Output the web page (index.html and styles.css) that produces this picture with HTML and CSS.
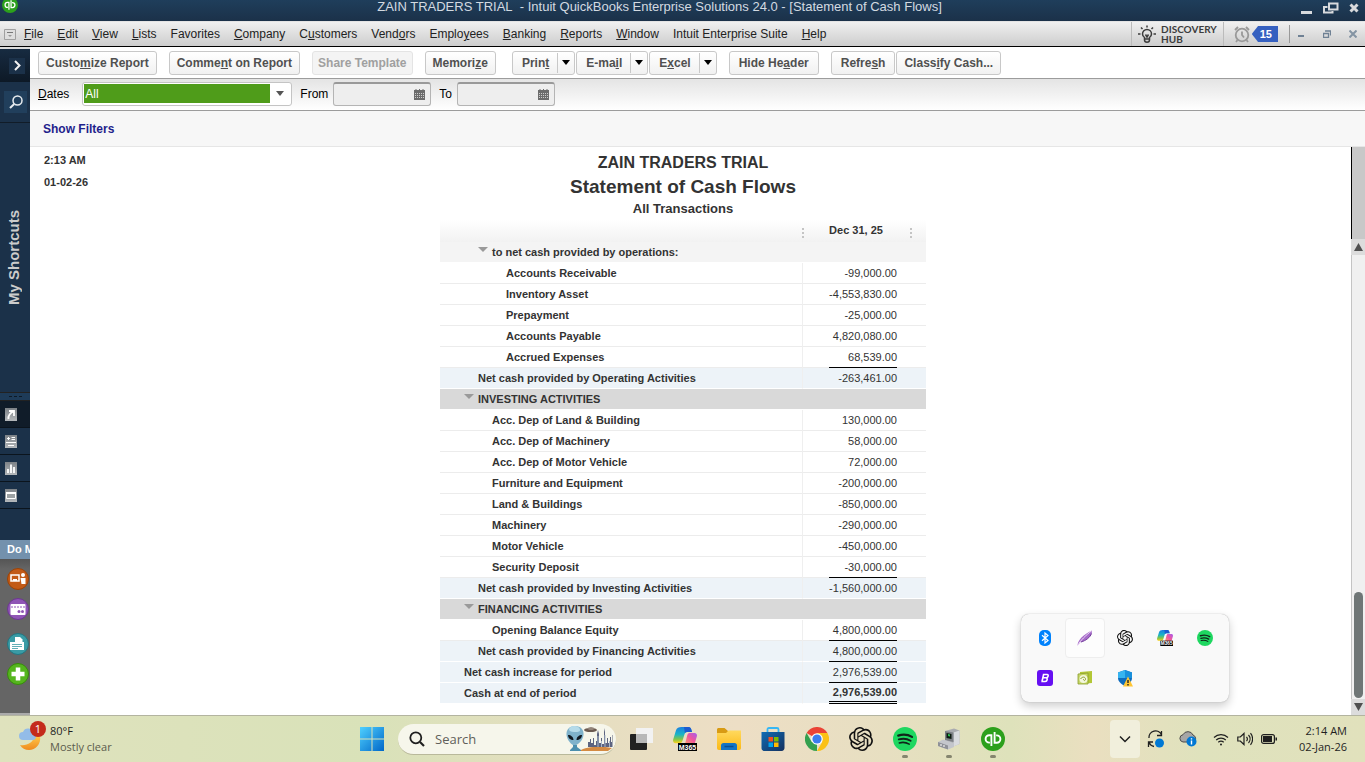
FILE: index.html
```
<!DOCTYPE html>
<html lang="en">
<head>
  <meta charset="UTF-8">
  <title>Statement of Cash Flows</title>
  <link rel="stylesheet" href="styles.css">
</head>
<body>

  <!-- shared icons -->
  <svg class="defs" aria-hidden="true">
    <defs>
      <linearGradient id="g-cop1" x1="0" y1="0" x2="0" y2="1"><stop offset="0" stop-color="#1b7fe0"/><stop offset=".45" stop-color="#19b4c8"/><stop offset=".75" stop-color="#7fc64a"/><stop offset="1" stop-color="#ffd21f"/></linearGradient>
      <linearGradient id="g-cop2" x1="1" y1="0" x2="0" y2="1"><stop offset="0" stop-color="#a55cf0"/><stop offset=".5" stop-color="#f0569c"/><stop offset="1" stop-color="#ff9a6b"/></linearGradient>
      <linearGradient id="g-win" x1="0" y1="0" x2="1" y2="1"><stop offset="0" stop-color="#4fd0ff"/><stop offset="1" stop-color="#0067c8"/></linearGradient>
      <linearGradient id="g-store" x1="0" y1="0" x2="1" y2="1"><stop offset="0" stop-color="#0f6cb5"/><stop offset="1" stop-color="#16305e"/></linearGradient>
      <linearGradient id="g-folder" x1="0" y1="0" x2="0" y2="1"><stop offset="0" stop-color="#ffd95e"/><stop offset="1" stop-color="#fbb917"/></linearGradient>
      <linearGradient id="g-moon" x1="0" y1="0" x2="0" y2="1"><stop offset="0" stop-color="#ffc94a"/><stop offset="1" stop-color="#ef8a1d"/></linearGradient>
      <linearGradient id="g-tile" x1="0" y1="0" x2="0" y2="1"><stop offset="0" stop-color="#7d8287"/><stop offset="1" stop-color="#b4b8bb"/></linearGradient>
    </defs>
    <symbol id="i-qb" viewBox="0 0 24 24">
      <circle cx="12" cy="12" r="12" fill="#2ca01c"/>
      <g fill="none" stroke="#fff" stroke-width="1.9">
        <path d="M10.4 19V8.2H8.300a3.700 3.700 0 0 0 0 7.400h.6"/>
        <path d="M13.600 5v10.800h2.100a3.700 3.700 0 0 0 0-7.400h-.6"/>
      </g>
    </symbol>
    <symbol id="i-openai" viewBox="0 0 24 24">
      <path d="M22.2819 9.8211a5.9847 5.9847 0 0 0-.5157-4.9108 6.0462 6.0462 0 0 0-6.5098-2.9A6.0651 6.0651 0 0 0 4.9807 4.1818a5.9847 5.9847 0 0 0-3.9977 2.9 6.0462 6.0462 0 0 0 .7427 7.0966 5.98 5.98 0 0 0 .511 4.9107 6.051 6.051 0 0 0 6.5146 2.9001A5.9847 5.9847 0 0 0 13.2599 24a6.0557 6.0557 0 0 0 5.7718-4.2058 5.9894 5.9894 0 0 0 3.9977-2.9001 6.0557 6.0557 0 0 0-.7475-7.0729zm-9.022 12.6081a4.4755 4.4755 0 0 1-2.8764-1.0408l.1419-.0804 4.7783-2.7582a.7948.7948 0 0 0 .3927-.6813v-6.7369l2.02 1.1686a.071.071 0 0 1 .038.052v5.5826a4.504 4.504 0 0 1-4.4945 4.4944zm-9.6607-4.1254a4.4708 4.4708 0 0 1-.5346-3.0137l.142.0852 4.783 2.7582a.7712.7712 0 0 0 .7806 0l5.8428-3.3685v2.3324a.0804.0804 0 0 1-.0332.0615L9.74 19.9502a4.4992 4.4992 0 0 1-6.1408-1.6464zM2.3408 7.8956a4.485 4.485 0 0 1 2.3655-1.9728V11.6a.7664.7664 0 0 0 .3879.6765l5.8144 3.3543-2.0201 1.1685a.0757.0757 0 0 1-.071 0l-4.8303-2.7865A4.504 4.504 0 0 1 2.3408 7.872zm16.5963 3.8558L13.1038 8.364 15.1192 7.2a.0757.0757 0 0 1 .071 0l4.8303 2.7913a4.4944 4.4944 0 0 1-.6765 8.1042v-5.6772a.79.79 0 0 0-.407-.667zm2.0107-3.0231l-.142-.0852-4.7735-2.7818a.7759.7759 0 0 0-.7854 0L9.409 9.2297V6.8974a.0662.0662 0 0 1 .0284-.0615l4.8303-2.7866a4.4992 4.4992 0 0 1 6.6802 4.66zM8.3065 12.863l-2.02-1.1638a.0804.0804 0 0 1-.038-.0567V6.0742a4.4992 4.4992 0 0 1 7.3757-3.4537l-.142.0805L8.704 5.459a.7948.7948 0 0 0-.3927.6813zm1.0976-2.3654l2.602-1.4998 2.6069 1.4998v2.9994l-2.5974 1.4997-2.6067-1.4997Z" fill="#111"/>
    </symbol>
    <symbol id="i-spotify" viewBox="0 0 24 24">
      <circle cx="12" cy="12" r="12" fill="#1ed760"/>
      <g fill="none" stroke="#10241a" stroke-linecap="round">
        <path d="M5.2 8.6c4.6-1.4 9.8-1 13.8 1.3" stroke-width="2.2"/>
        <path d="M5.8 12.4c4-1.1 8.4-.7 11.8 1.3" stroke-width="1.9"/>
        <path d="M6.3 15.9c3.4-.9 7-.5 9.9 1.2" stroke-width="1.6"/>
      </g>
    </symbol>
    <symbol id="i-m365" viewBox="0 0 24 24">
      <path d="M8.500 0h7c1.600 0 2.400 1 2.800 2.400L19 5h-4.600c-1.600 0-2.400.8-2.900 2.300L9.400 14c-.5 1.500-1.400 2.200-2.900 2.200H2.800C.6 16.200-.4 14.500.2 12.400L3 3.200C3.700 1 5.800 0 8.500 0z" fill="url(#g-cop1)"/>
      <path d="M11 0h4.500c1.600 0 2.400 1 2.800 2.400L19 5h-4.600c-1.200 0-2 .5-2.500 1.300z" fill="#1d5bd0"/>
      <path d="M16.500 6h5c2 0 2.900 1.600 2.300 3.600l-1.600 5.400c-.5 1.500-1.200 2-2.600 2H12l2.200-8.400C14.600 7 15.200 6 16.500 6z" fill="url(#g-cop2)"/>
      <rect x="5" y="16" width="19" height="8" fill="#000"/>
      <text x="14.500" y="22.600" text-anchor="middle" class="m365-text">M365</text>
    </symbol>
  </svg>

  <header class="titlebar">
    <svg class="app-logo" viewBox="0 0 24 24"><use href="#i-qb"/></svg>
    <span class="window-title">ZAIN TRADERS TRIAL&nbsp; - Intuit QuickBooks Enterprise Solutions 24.0 - [Statement of Cash Flows]</span>
    <div class="window-controls">
      <button aria-label="Minimize"><svg width="12" height="12" viewBox="0 0 12 12"><path d="M0 9h11v3H0z" fill="#d8dadd"/></svg></button>
      <button aria-label="Restore"><svg width="16" height="12" viewBox="0 0 16 12"><path d="M6 1.500h8.500v6H6zM4.500 5H1v5.500h8.500V9" fill="none" stroke="#d8dadd" stroke-width="2"/></svg></button>
      <button aria-label="Close"><svg width="10" height="12" viewBox="0 0 10 12"><path d="M1.500 2.500l7 7m0-7l-7 7" stroke="#d8dadd" stroke-width="3"/></svg></button>
    </div>
  </header>

  <nav class="menubar">
    <svg class="menu-icon" width="12" height="11" viewBox="0 0 12 11"><path d="M.5.500h11v10H.5z" fill="#dedede" stroke="#a0a0a0"/><path d="M3 3.500h6" stroke="#777"/><path d="M4 6h4L6 8z" fill="#999"/></svg>
    <ul class="menus">
      <li><a href="#"><u>F</u>ile</a></li>
      <li><a href="#"><u>E</u>dit</a></li>
      <li><a href="#"><u>V</u>iew</a></li>
      <li><a href="#"><u>L</u>ists</a></li>
      <li><a href="#">Favorites</a></li>
      <li><a href="#"><u>C</u>ompany</a></li>
      <li><a href="#">C<u>u</u>stomers</a></li>
      <li><a href="#">Vend<u>o</u>rs</a></li>
      <li><a href="#">Emplo<u>y</u>ees</a></li>
      <li><a href="#"><u>B</u>anking</a></li>
      <li><a href="#"><u>R</u>eports</a></li>
      <li><a href="#"><u>W</u>indow</a></li>
      <li><a href="#">Intuit Enterprise Suite</a></li>
      <li><a href="#"><u>H</u>elp</a></li>
    </ul>
    <button class="discovery">
      <svg width="18" height="18" viewBox="0 0 18 18" fill="none" stroke="#3c3c3c" stroke-width="1.500"><path d="M6.500 12.500C5 11.500 4.500 10.300 4.500 9a4.500 4.500 0 0 1 9 0c0 1.300-.5 2.500-2 3.500V15c0 1.500-1 2.200-2.500 2.200S6.500 16.500 6.500 15zM6.500 14h5M7.500 9.500L9 12l1.500-2.500M9 .500V2.500M3 2.500l1.500 1.500M15 2.500L13.500 4M0 9h2.500M15.500 9H18"/></svg>
      <span>DISCOVERY<br>HUB</span>
    </button>
    <button class="reminders" aria-label="Reminders">
      <svg width="16" height="17" viewBox="0 0 16 17" fill="none" stroke="#999" stroke-width="1.800"><circle cx="8" cy="9" r="6.300"/><path d="M8 5.500V9l2 2.500M1 4l3-3M15 4l-3-3M3.500 14L2 16M12.500 14l1.500 2"/></svg>
      <span class="badge">15</span>
    </button>
    <div class="doc-controls">
      <button aria-label="Minimize report"><svg width="8" height="8" viewBox="0 0 8 8"><path d="M1 5h6v2H1z" fill="#6f8194"/></svg></button>
      <button aria-label="Restore report"><svg width="8" height="8" viewBox="0 0 8 8"><path d="M2 1h5.500v4.500M.5 3.500h5v4h-5z" fill="none" stroke="#6f8194" stroke-width="1.300"/></svg></button>
      <button aria-label="Close report"><svg width="8" height="8" viewBox="0 0 8 8"><path d="M.5.500l7 7m0-7l-7 7" stroke="#8494a3" stroke-width="2"/></svg></button>
    </div>
  </nav>

  <div class="workspace">
    <aside class="sidebar">
      <button class="expand" aria-label="Expand">
        <span><svg width="7" height="11" viewBox="0 0 7 11"><path d="M1 1l4.500 4.500L1 10" fill="none" stroke="#f2f2f2" stroke-width="2"/></svg></span>
      </button>
      <button class="side-search" aria-label="Search">
        <span><svg width="14" height="14" viewBox="0 0 14 14" fill="none" stroke="#e8ecef" stroke-width="1.500"><circle cx="8.500" cy="5.500" r="4.500"/><path d="M5.200 9L1 13" stroke-width="2"/></svg></span>
      </button>
      <div class="shortcuts"><span>My Shortcuts</span></div>
      <div class="handle"><i></i><i></i><i></i></div>
      <button class="side-item active" aria-label="My Shortcuts"><svg width="12" height="13" viewBox="0 0 12 13"><path d="M0 0h12v13H0z" fill="url(#g-tile)"/><path d="M4 3h5v5M9 3C5 5 3 7.500 3.500 11" fill="none" stroke="#fff" stroke-width="1.800"/></svg></button>
      <button class="side-item" aria-label="View Balances"><svg width="12" height="13" viewBox="0 0 12 13"><path d="M0 0h12v13H0z" fill="url(#g-tile)"/><path d="M2 3.500h3M3.500 2v3M6.500 2.500H10M6.500 4.500H10M1 7.500h10M3 10.500h6" stroke="#fff" fill="none"/></svg></button>
      <button class="side-item" aria-label="Run Favorite Reports"><svg width="12" height="13" viewBox="0 0 12 13"><path d="M0 0h12v13H0z" fill="url(#g-tile)"/><path d="M3 11V7M6 11V2.500M9 11V5" stroke="#fff" stroke-width="1.800"/></svg></button>
      <button class="side-item" aria-label="Open Windows"><svg width="12" height="13" viewBox="0 0 12 13"><path d="M0 0h12v13H0z" fill="url(#g-tile)"/><path d="M1.500 3.500h9v6h-9z" fill="#9da2a4" stroke="#fff"/><path d="M1 3h10v2H1z" fill="#fff"/></svg></button>
      <div class="do-more">Do More</div>
      <div class="promos">
        <a href="#" aria-label="Payroll"><svg viewBox="0 0 22 22"><circle cx="11" cy="11" r="10.500" fill="#c25a16" stroke="#9c4307"/><path d="M4 7h8v6H4z" fill="none" stroke="#fff" stroke-width="1.500"/><path d="M6 11h4v2H6z" fill="#fff"/><circle cx="16" cy="7" r="2" fill="#fff"/><path d="M13.500 10h5v6h-4z" fill="#fff"/></svg></a>
        <a href="#" aria-label="Credit cards"><svg viewBox="0 0 22 22"><circle cx="11" cy="11" r="10.500" fill="#8f55b5" stroke="#6d3792"/><rect x="3.500" y="6" width="15" height="11" rx="1" fill="#fff"/><path d="M4 9h14" stroke="#8f55b5" stroke-dasharray="2 1"/><circle cx="12" cy="13.500" r="1.500" fill="#8f55b5"/><circle cx="15.500" cy="13.500" r="1.500" fill="#8f55b5"/></svg></a>
        <a href="#" aria-label="Order checks" class="spaced"><svg viewBox="0 0 22 22"><circle cx="11" cy="11" r="10.500" fill="#3a9ba5" stroke="#247580"/><path d="M8 4h5l2.500 2.500V10H8z" fill="#fff"/><path d="M3 9h14v8H3z" fill="#fff"/><path d="M5 11.500h10M5 13.500h10M5 15.500h6" stroke="#3a9ba5" stroke-width=".8"/></svg></a>
        <a href="#" aria-label="Add services"><svg viewBox="0 0 22 22"><circle cx="11" cy="11" r="10.500" fill="#55b51e" stroke="#378c0b"/><path d="M11 4.500v13M4.500 11h13" stroke="#fff" stroke-width="4.500"/></svg></a>
      </div>
    </aside>

    <main class="content">
      <div class="toolbar">
        <button class="btn">Custo<u>m</u>ize Report</button>
        <button class="btn">Comme<u>n</u>t on Report</button>
        <button class="btn" disabled>Share Template</button>
        <button class="btn">Memori<u>z</u>e</button>
        <div class="btn-group exports">
          <div class="split"><button>Prin<u>t</u></button><button aria-label="Print options"><span class="caret"></span></button></div>
          <div class="split"><button>E-ma<u>i</u>l</button><button aria-label="E-mail options"><span class="caret"></span></button></div>
          <div class="split"><button>E<u>x</u>cel</button><button aria-label="Excel options"><span class="caret"></span></button></div>
        </div>
        <button class="btn wide">Hide He<u>a</u>der</button>
        <div class="btn-group">
          <button class="btn wide">Refre<u>s</u>h</button>
          <button class="btn">Class<u>i</u>fy Cash...</button>
        </div>
      </div>

      <div class="datebar">
        <label for="dates"><u>D</u>ates</label>
        <div class="combo">
          <select id="dates"><option>All</option></select>
          <span class="caret"></span>
        </div>
        <label for="from">From</label>
        <div class="date-field">
          <input type="text" id="from">
          <svg width="11" height="11" viewBox="0 0 11 11"><path d="M0 1h11v10H0z" fill="#6c6c6c"/><path d="M2 0v2M5.500 0v2M9 0v2" stroke="#6c6c6c"/><path d="M1 4.500h9M1 6.500h9M1 8.500h9" stroke="#ccc" stroke-dasharray="1 1"/></svg>
        </div>
        <label for="to">To</label>
        <div class="date-field">
          <input type="text" id="to">
          <svg width="11" height="11" viewBox="0 0 11 11"><path d="M0 1h11v10H0z" fill="#6c6c6c"/><path d="M2 0v2M5.500 0v2M9 0v2" stroke="#6c6c6c"/><path d="M1 4.500h9M1 6.500h9M1 8.500h9" stroke="#ccc" stroke-dasharray="1 1"/></svg>
        </div>
      </div>

      <div class="filters"><a href="#">Show Filters</a></div>

      <div class="report-pane">
        <section class="report">
          <div class="report-meta">
            <p>2:13 AM</p>
            <p>01-02-26</p>
          </div>
          <div class="report-head">
            <h2>ZAIN TRADERS TRIAL</h2>
            <h1>Statement of Cash Flows</h1>
            <h3>All Transactions</h3>
          </div>
          <table class="statement">
            <thead>
              <tr><th><span class="grip"></span></th><th><span class="grip"></span>Dec 31, 25</th></tr>
            </thead>
            <tbody>
              <tr class="group"><td class="in3"><span class="tri"></span>to net cash provided by operations:</td><td></td></tr>
              <tr><td class="in4">Accounts Receivable</td><td><span>-99,000.00</span></td></tr>
              <tr><td class="in4">Inventory Asset</td><td><span>-4,553,830.00</span></td></tr>
              <tr><td class="in4">Prepayment</td><td><span>-25,000.00</span></td></tr>
              <tr><td class="in4">Accounts Payable</td><td><span>4,820,080.00</span></td></tr>
              <tr><td class="in4">Accrued Expenses</td><td><span class="rule">68,539.00</span></td></tr>
              <tr class="total"><td class="in2">Net cash provided by Operating Activities</td><td><span>-263,461.00</span></td></tr>
              <tr class="section"><td class="in2"><span class="tri"></span>INVESTING ACTIVITIES</td><td></td></tr>
              <tr><td class="in3">Acc. Dep of Land &amp; Building</td><td><span>130,000.00</span></td></tr>
              <tr><td class="in3">Acc. Dep of Machinery</td><td><span>58,000.00</span></td></tr>
              <tr><td class="in3">Acc. Dep of Motor Vehicle</td><td><span>72,000.00</span></td></tr>
              <tr><td class="in3">Furniture and Equipment</td><td><span>-200,000.00</span></td></tr>
              <tr><td class="in3">Land &amp; Buildings</td><td><span>-850,000.00</span></td></tr>
              <tr><td class="in3">Machinery</td><td><span>-290,000.00</span></td></tr>
              <tr><td class="in3">Motor Vehicle</td><td><span>-450,000.00</span></td></tr>
              <tr><td class="in3">Security Deposit</td><td><span class="rule">-30,000.00</span></td></tr>
              <tr class="total"><td class="in2">Net cash provided by Investing Activities</td><td><span>-1,560,000.00</span></td></tr>
              <tr class="section"><td class="in2"><span class="tri"></span>FINANCING ACTIVITIES</td><td></td></tr>
              <tr><td class="in3">Opening Balance Equity</td><td><span class="rule">4,800,000.00</span></td></tr>
              <tr class="total"><td class="in2">Net cash provided by Financing Activities</td><td><span class="rule">4,800,000.00</span></td></tr>
              <tr class="total"><td class="in1">Net cash increase for period</td><td><span class="rule">2,976,539.00</span></td></tr>
              <tr class="total grand"><td class="in1">Cash at end of period</td><td><span class="rule double">2,976,539.00</span></td></tr>
            </tbody>
          </table>
        </section>
        <div class="scrollbar">
          <div class="scroll-cap"></div>
          <button aria-label="Scroll up"><svg width="9" height="8" viewBox="0 0 9 8"><path d="M4.500 0L9 8H0z" fill="#505050"/></svg></button>
          <div class="track"><div class="thumb"></div></div>
          <button aria-label="Scroll down"><svg width="9" height="8" viewBox="0 0 9 8"><path d="M4.500 8L9 0H0z" fill="#505050"/></svg></button>
        </div>
      </div>
    </main>
  </div>

  <div class="tray-popup">
    <button aria-label="Bluetooth"><svg width="12" height="16" viewBox="0 0 12 16"><rect width="12" height="16" rx="5" fill="#0082fc"/><path d="M3 5.200l6 5.300L6 13V3l3 2.500-6 5.300" fill="none" stroke="#fff" stroke-width="1.200"/></svg></button>
    <button class="hover" aria-label="Notes"><svg width="16" height="16" viewBox="0 0 16 16"><path d="M.5 15.500C1 9.500 6.500 4.500 15 .5c.3 4.500-3.500 9-11.500 11.500z" fill="#a56ac9"/><path d="M.5 15.500C4 10 8 6 15 .5" stroke="#ecd9f5" stroke-width="1" fill="none"/><path d="M4 12C9 10.500 13 7.500 14.500 3.500" stroke="#6d3597" fill="none"/></svg></button>
    <button aria-label="ChatGPT"><svg width="16" height="16"><use href="#i-openai"/></svg></button>
    <button aria-label="Microsoft 365 Copilot"><svg width="16" height="16"><use href="#i-m365"/></svg></button>
    <button aria-label="Spotify"><svg width="16" height="16"><use href="#i-spotify"/></svg></button>
    <button aria-label="Bootstrap Studio"><svg width="16" height="16" viewBox="0 0 16 16"><rect width="16" height="16" rx="3" fill="#6610f2"/><path d="M5.800 4.500h4.400c1.500 0 1.300 3-1 3.300H6 9c2 .2 1.300 3.700-.8 3.700H4.300M6.600 4.500L5 11.500" fill="none" stroke="#fff" stroke-width="1.600"/></svg></button>
    <button aria-label="NVIDIA"><svg width="16" height="14" viewBox="0 0 16 14"><path d="M3 1l12-1v12l-12 1z" fill="#b3c736"/><path d="M1 3l10-1v11H1z" fill="#c7d86a" stroke="#8c9d2d" stroke-width=".8"/><circle cx="6.500" cy="8" r="4" fill="#f4f7df"/><path d="M3.500 8c2-3 5-2 5 0s-2 2-2 0" fill="none" stroke="#8da02c"/></svg></button>
    <button aria-label="Windows Security"><svg width="16" height="17" viewBox="0 0 16 17"><path d="M8 0l7 2.500V8c0 3.500-3 6-7 8-4-2-7-4.500-7-8V2.500z" fill="#0f6cbd"/><path d="M8 0v8H1V2.500z" fill="#36b4f0"/><path d="M8 0l7 2.500V8H8z" fill="#1890dc"/><path d="M11 6.500l5 10H6z" fill="#ffc533"/><path d="M11 10v3M11 14v1.500" stroke="#222" stroke-width="1.400"/></svg></button>
  </div>

  <footer class="taskbar">
    <button class="weather">
      <span class="weather-icon">
        <svg width="24" height="24" viewBox="0 0 24 24"><path d="M22 9c1.500 8-4.500 14-11 14-4 0-7-1.500-9-5 7 1 13-2.500 15-9z" fill="url(#g-moon)"/><path d="M5 13a4 4 0 0 1 0-8 5.500 5.500 0 0 1 10.500 1A3.600 3.600 0 0 1 15 13z" fill="#93bce8"/></svg>
        <b>1</b>
      </span>
      <span class="weather-text"><span>80°F</span><span class="muted">Mostly clear</span></span>
    </button>

    <div class="apps">
      <button aria-label="Start"><svg width="24" height="24" viewBox="0 0 24 24"><path d="M0 0h11.500v11.500H0zM12.500 0H24v11.500H12.500zM0 12.500h11.500V24H0zM12.500 12.500H24V24H12.500z" fill="url(#g-win)"/></svg></button>
      <label class="search">
        <svg width="16" height="16" viewBox="0 0 16 16" fill="none" stroke="#1f1f1f" stroke-width="1.800"><circle cx="6.800" cy="6.800" r="5.500"/><path d="M11 11l4 4" stroke-width="2.200"/></svg>
        <input type="text" placeholder="Search" aria-label="Search">
        <svg width="48" height="25" viewBox="0 0 48 25">
          <path d="M13 25c8-5 22-5 33-3l-4 3z" fill="#d48a42"/>
          <path d="M22 21v-5h2v-3h1v4h2v-5h1v7h2v-4h1V8l1-4 1 4v9h2v-5h1v6h2V6l.5-4 .5 4v11h2v-5h1v5h2v-6h1v5h1v-7h.5v12z" fill="#5d6480"/>
          <path d="M31.500 21V10h1v11M38.500 21V9h1v12M35 21v-6h1v6M43 21v-6h1v6" fill="#a9b7cb"/>
          <ellipse cx="24.500" cy="4" rx="6.500" ry="2" fill="#6b5a50"/><ellipse cx="25" cy="2.500" rx="3" ry="1.500" fill="#93857b"/>
          <path d="M9 0c6 0 9 4 8.500 9S12 19 9 19.500 1 14 .5 9 3 0 9 0z" fill="#7fb2cb"/>
          <path d="M8 0c4 0 6 2 6 4S11 6 8 6 3 5 3 3.500 5 0 8 0z" fill="#b5dbea"/>
          <path d="M2 9c3 0 5.500 2 5.500 5C4.500 14 2 12 2 9zM16 9c-3 0-5.500 2-5.500 5 3 0 5.500-2 5.500-5z" fill="#101820"/>
          <path d="M7 19h4v2l4 3v1H4v-1l3-3z" fill="#4c8fae"/>
        </svg>
      </label>
      <button aria-label="Task view"><svg width="24" height="24" viewBox="0 0 24 24"><rect x="1" y="7" width="17" height="16" rx="1" fill="#222"/><path d="M7 1h17v15H7z" fill="#f2f2f2"/><path d="M7 7h11v9H7z" fill="#b8b8b8"/></svg></button>
      <button aria-label="Microsoft 365 Copilot"><svg width="24" height="24"><use href="#i-m365"/></svg></button>
      <button aria-label="File Explorer"><svg width="24" height="22" viewBox="0 0 24 22"><path d="M0 1.500C0 .7.700 0 1.500 0h6L11 3h12c.6 0 1 .4 1 1v5H0z" fill="#d89b14"/><path d="M0 5h9l2.500-2.500H24V20c0 1-.7 2-2 2H2c-1.300 0-2-1-2-2z" fill="url(#g-folder)"/><path d="M4 22v-4.500C4 16 5 15 6.500 15h11c1.500 0 2.500 1 2.500 2.500V22z" fill="#1274c4"/><path d="M7.500 18.500h9" stroke="#0a4f90" stroke-width="1.500"/></svg></button>
      <button aria-label="Microsoft Store"><svg width="24" height="24" viewBox="0 0 24 24"><path d="M6.500 7V2.500C6.500 1.500 7 1 8 1h8c1 0 1.500.5 1.500 1.500V7" fill="none" stroke="#36b7f5" stroke-width="1.800"/><path d="M.5 5h23v16c0 1.500-1 3-3 3h-17c-2 0-3-1.500-3-3z" fill="url(#g-store)"/><path d="M7.500 10H12v4.500H7.500z" fill="#f25022"/><path d="M13 10h4.500v4.500H13z" fill="#7fba00"/><path d="M7.500 15.500H12V20H7.500z" fill="#00a4ef"/><path d="M13 15.500h4.500V20H13z" fill="#ffb900"/></svg></button>
      <button aria-label="Chrome"><svg width="24" height="24" viewBox="0 0 24 24"><path d="M12 12L1.600 6A12 12 0 0 1 22.400 6z" fill="#ea4335"/><path d="M12 12V24A12 12 0 0 1 1.600 6l5.200 9z" fill="#34a04f"/><path d="M12 6h10.400A12 12 0 0 1 12 24l5.200-9z" fill="#fbc116"/><circle cx="12" cy="12" r="5.800" fill="#fff"/><circle cx="12" cy="12" r="4.600" fill="#3b7ded"/></svg></button>
      <button aria-label="ChatGPT"><svg width="24" height="24"><use href="#i-openai"/></svg></button>
      <button class="running" aria-label="Spotify"><svg width="24" height="24"><use href="#i-spotify"/></svg></button>
      <button class="running" aria-label="Server"><svg width="22" height="22" viewBox="0 0 22 22"><path d="M7 3l9-2.500 5.500 2V16l-8 3L7 15z" fill="#a9abb0"/><path d="M15.500 4.500l6-2V16l-6 2.500z" fill="#d9dbdf"/><path d="M7 3l8.500 1.500V14L7 12z" fill="#7d8086"/><path d="M8.500 5l5 1v5l-5-1z" fill="#0c1a10"/><path d="M10 6l2 .5v2l-2-.5z" fill="#2fc04e"/><path d="M0 14l5-2.500 11 3.500v4l-6 2.500L0 18z" fill="#c4c6cc"/><path d="M0 14l10 3.500V21.500L0 18z" fill="#8f9198"/><path d="M3 16v2M6 17v2" stroke="#fff"/></svg></button>
      <button class="running" aria-label="QuickBooks"><svg width="24" height="24"><use href="#i-qb"/></svg></button>
    </div>

    <div class="tray">
      <button class="chevron" aria-label="Show hidden icons"><svg width="12" height="8" viewBox="0 0 12 8"><path d="M1 1.500l5 5 5-5" fill="none" stroke="#1f1f1f" stroke-width="1.500"/></svg></button>
      <button class="tray-cell" aria-label="Update"><svg width="18" height="18" viewBox="0 0 18 18"><path d="M2 8a6.500 6.500 0 0 1 12.500-3M14.500 1v4.500H10M1.500 17v-5H6M2 12.500c1 2 2.500 3.500 5 4" fill="none" stroke="#1f1f1f" stroke-width="1.300"/><circle cx="12.500" cy="13" r="4.500" fill="#0078d4"/></svg></button>
      <button class="tray-cell" aria-label="OneDrive"><svg width="18" height="16" viewBox="0 0 18 16"><path d="M4 11a3.700 3.700 0 0 1 0-7.300A5.500 5.500 0 0 1 14 4a4 4 0 0 1 1 7z" fill="#a6a6a6" stroke="#4b4b4b"/><circle cx="12.500" cy="10.500" r="5" fill="#0078d4"/><path d="M12.500 9.500v4M12.500 7.300v1.200" stroke="#fff" stroke-width="1.400"/></svg></button>
      <button class="tray-status" aria-label="Network, volume and battery">
        <svg width="16" height="13" viewBox="0 0 16 13" fill="none" stroke="#1f1f1f" stroke-width="1.200"><path d="M1 4.500a10 10 0 0 1 14 0M3.200 7a7 7 0 0 1 9.600 0M5.300 9.300a4 4 0 0 1 5.400 0"/><circle cx="8" cy="11.500" r="1" fill="#1f1f1f" stroke="none"/></svg>
        <svg width="16" height="14" viewBox="0 0 16 14" fill="none" stroke="#1f1f1f" stroke-width="1.200"><path d="M.8 5v4h2.500L7 12.500v-11L3.300 5zM9.500 4.800a3.500 3.500 0 0 1 0 4.400M11.500 3a6 6 0 0 1 0 8M13.500 1.200a9 9 0 0 1 0 11.600"/></svg>
        <svg width="16" height="10" viewBox="0 0 16 10"><rect x=".6" y=".6" width="12.800" height="8.800" rx="2" fill="none" stroke="#1f1f1f" stroke-width="1.200"/><path d="M2 2h9v6H2zM14.500 3.500h1.500v3h-1.500z" fill="#1f1f1f"/></svg>
      </button>
      <div class="clock"><span>2:14 AM</span><span>02-Jan-26</span></div>
    </div>
  </footer>

</body>
</html>
```
FILE: styles.css
```
* {
  box-sizing: border-box;
}

body {
  margin: 0;
  height: 100vh;
  display: flex;
  flex-direction: column;
  position: relative;
  overflow: hidden;
  background-color: #fff;
  color: #333;
  font-family: "Liberation Sans", Arial, sans-serif;
  font-size: 12px;
}

button {
  font: inherit;
  color: inherit;
  background: none;
  border: none;
  padding: 0;
}

svg {
  display: block;
  flex: none;
}

.defs {
  position: absolute;
  width: 0;
  height: 0;
}

.m365-text {
  font: bold 7px "Liberation Sans", Arial, sans-serif;
  fill: #fff;
}

/* title bar */
.titlebar {
  flex: none;
  height: 21px;
  display: flex;
  align-items: flex-start;
  overflow: hidden;
  background: linear-gradient(#1f3e5b, #1b3149);
  color: #d3dae1;
}

.app-logo {
  width: 16px;
  height: 16px;
  margin: -3px 0 0 2px;
}

.window-title {
  flex: 1;
  text-align: center;
  font-size: 13px;
  line-height: 14px;
}

.window-controls {
  display: flex;
  gap: 10px;
  padding: 2px 6px 0 0;
}

/* menu bar */
.menubar {
  flex: none;
  height: 26px;
  display: flex;
  align-items: center;
  background: linear-gradient(#f0f0f0, #cdcdcd);
  border-top: 1px solid #e4e4e4;
  border-bottom: 1px solid #000;
  color: #222;
}

.menu-icon {
  margin: 0 8px 0 4px;
}

.menus {
  flex: 1;
  display: flex;
  gap: 14px;
  margin: 0;
  padding: 0;
  list-style: none;
}

.menus a {
  color: inherit;
  text-decoration: none;
  white-space: nowrap;
}

.discovery {
  display: flex;
  align-items: center;
  align-self: stretch;
  gap: 5px;
  padding: 0 6px;
  border-left: 1px solid #bbb;
  border-right: 1px solid #bbb;
  color: #3c3c3c;
  font: bold 10px/10px Lato, sans-serif;
  text-align: left;
}

.reminders {
  display: flex;
  align-items: center;
  gap: 2px;
  padding: 0 11px 0 10px;
}

.badge {
  padding: 0 6px 0 8px;
  background-color: #3560c0;
  clip-path: polygon(0 50%, 24% 0, 100% 0, 100% 100%, 24% 100%);
  color: #fff;
  font-size: 11px;
  font-weight: bold;
  line-height: 16px;
}

.doc-controls {
  display: flex;
  gap: 18px;
  padding: 5px 8px 5px 7px;
  border-left: 1px solid #999;
}

/* left sidebar */
.workspace {
  flex: 1;
  display: flex;
  min-height: 0;
}

.sidebar {
  flex: none;
  width: 30px;
  display: flex;
  flex-direction: column;
  overflow: hidden;
  background-color: #1b3149;
  border-top: 2px solid #dcdcdc;
}

.expand {
  display: grid;
  place-items: center;
  height: 33px;
  padding-left: 4px;
  background: linear-gradient(#172b41, #0d1926);
}

.expand span {
  display: grid;
  place-items: center;
  width: 16px;
  height: 16px;
  background-color: #1b3149;
}

.side-search {
  height: 41px;
  border-bottom: 1px solid #111c28;
}

.side-search span {
  display: grid;
  place-items: center;
  width: 23px;
  height: 22px;
  margin: 0 4px;
  background-color: #213f5c;
}

.shortcuts {
  flex: 1;
  display: grid;
  place-items: center;
  padding-right: 3px;
}

.shortcuts span {
  writing-mode: vertical-rl;
  rotate: 180deg;
  color: #ccc;
  font-size: 15px;
  font-weight: bold;
}

.handle {
  display: flex;
  justify-content: center;
  align-items: center;
  gap: 2px;
  height: 9px;
  background-color: #1e3b58;
  border-top: 1px solid #222;
  border-bottom: 1px solid #222;
}

.handle i {
  width: 3px;
  height: 1px;
  background-color: #0c1926;
}

.side-item {
  height: 27px;
  padding-left: 5px;
  border-bottom: 1px solid #0b141d;
}

.side-item.active {
  background-color: #101c29;
}

.do-more {
  height: 19px;
  margin-top: 31px;
  padding-left: 7px;
  background: #7391ad;
  color: #fff;
  font-size: 11px;
  font-weight: bold;
  line-height: 19px;
  white-space: nowrap;
}

.promos {
  height: 156px;
  padding: 9px 0 0 7px;
  background: linear-gradient(#555, #656565 10px);
  border-bottom: 2px solid #aaa;
}

.promos a {
  display: block;
  width: 22px;
  height: 22px;
  margin-bottom: 8px;
}

.promos .spaced {
  margin-top: 13px;
}

/* report window */
.content {
  flex: 1;
  min-width: 0;
  display: flex;
  flex-direction: column;
}

.toolbar {
  flex: none;
  height: 32px;
  display: flex;
  align-items: center;
  gap: 12px;
  padding-left: 8px;
  border-bottom: 1px solid #9c9c9c;
  color: #505050;
  font-weight: bold;
}

.btn,
.split {
  height: 24px;
  border: 1px solid #c8c8c8;
  border-radius: 3px;
  background: linear-gradient(#fff, #f1f1f1);
  white-space: nowrap;
}

.btn {
  padding: 0 7px;
}

.btn.wide {
  padding: 0 9px;
}

.btn:disabled {
  background: #f4f4f4;
  border-color: #e4e4e4;
  color: #a0a0a0;
  padding: 0 5px;
}

.btn-group {
  display: flex;
  gap: 1px;
}

.exports {
  margin-left: 4px;
}

.split {
  display: flex;
  align-items: stretch;
}

.split button:first-child {
  padding: 0 8px 0 9px;
}

.split button:last-child {
  display: grid;
  place-items: center;
  width: 17px;
  margin: 1px 0;
  border-left: 1px solid #c8c8c8;
}

.caret {
  border: 4px solid transparent;
  border-top: 5px solid #000;
  border-bottom: none;
}

.datebar {
  flex: none;
  height: 32px;
  display: flex;
  align-items: center;
  gap: 8px;
  padding: 0 0 2px 8px;
  background: linear-gradient(#e4e4e4, #fff);
  border-bottom: 1px solid #9c9c9c;
  color: #000;
}

.combo {
  display: flex;
  align-items: center;
  width: 210px;
  height: 24px;
  margin-left: 5px;
  padding: 1px;
  border: 1px solid #c4c4c4;
  border-radius: 3px;
  background-color: #fff;
}

.combo select {
  appearance: none;
  flex: 1;
  height: 19px;
  padding: 0 1px;
  border: none;
  border-radius: 0;
  background-color: #4f9c1a;
  color: #fff;
  font: inherit;
}

.combo .caret {
  margin: 0 6px;
  border-top-color: #555;
}

.date-field {
  display: flex;
  align-items: center;
  width: 98px;
  height: 24px;
  margin-left: -3px;
  padding-right: 5px;
  background-color: #eee;
  border: 1px solid #b4b4b4;
  border-top: 2px solid #999;
  border-radius: 3px;
}

.date-field input {
  flex: 1;
  min-width: 0;
  border: none;
  background: none;
  font: inherit;
}

.filters {
  flex: none;
  height: 36px;
  padding-left: 13px;
  background-color: #f7f7f7;
  border-bottom: 1px solid #e6e6e6;
  line-height: 36px;
}

.filters a {
  color: #1f1f8c;
  font-weight: bold;
  text-decoration: none;
}

.report-pane {
  flex: 1;
  display: flex;
  min-height: 0;
}

.report {
  flex: 1;
  display: grid;
  grid-template-columns: 1fr auto 1fr;
  grid-template-rows: 73px auto;
  align-content: start;
  padding-right: 15px;
  overflow: hidden;
}

.report-meta {
  grid-column: 1;
  padding: 2px 0 0 14px;
  font-size: 11px;
  font-weight: bold;
  line-height: 22px;
}

.report-meta p {
  margin: 0;
}

.report-head {
  grid-column: 2;
  padding-top: 5px;
  text-align: center;
}

.report-head h1,
.report-head h2,
.report-head h3 {
  margin: 0;
}

.report-head h2 {
  font-size: 16px;
  line-height: 22px;
}

.report-head h1 {
  font-size: 19px;
  line-height: 26px;
}

.report-head h3 {
  font-size: 13px;
  line-height: 18px;
}

.statement {
  grid-column: 2;
  width: 486px;
  border-spacing: 0;
  table-layout: fixed;
  font-size: 11px;
  line-height: 20px;
}

.statement th {
  height: 22px;
  padding: 0;
  background: linear-gradient(#fff, #f2f2f2);
  line-height: 20px;
  vertical-align: top;
}

.statement th:last-child,
.statement td:last-child {
  width: 124px;
}

.statement th:last-child {
  padding-right: 16px;
}

/* dotted column resize grip */
.grip {
  float: right;
  width: 2px;
  height: 11px;
  margin: 8px -2px 0 0;
  background: repeating-linear-gradient(#c4c4c4 0 2px, transparent 2px 4px);
}

.statement td {
  height: 21px;
  padding: 0;
  border-bottom: 1px solid #ececec;
  white-space: nowrap;
}

.statement td:first-child {
  font-weight: bold;
}

.statement td:last-child {
  border-left: 1px solid #efefef;
}

.statement td:last-child span {
  display: block;
  margin: 0 29px 0 26px;
  text-align: right;
}

.statement td:last-child .rule {
  margin-bottom: -1px;
  border-bottom: 1px solid #000;
}

.statement td:last-child .double {
  line-height: 18px;
  border-bottom: 3px double #000;
}

.statement .in1 { padding-left: 24px; }
.statement .in2 { padding-left: 38px; }
.statement .in3 { padding-left: 52px; }
.statement .in4 { padding-left: 66px; }

.statement .group td,
.statement .section td,
.statement .total td {
  border-bottom-color: #fff;
}

.statement .group td {
  background-color: #f4f4f4;
  border-left: none;
}

.statement .section td {
  background-color: #d9d9d9;
  border-left: none;
}

.statement .total td {
  background-color: #edf3f8;
}

.statement .grand td {
  font-weight: bold;
}

.tri {
  float: left;
  margin: 5px 0 0 -14px;
  border: 5px solid transparent;
  border-top-color: #9a9a9a;
  border-bottom: none;
}

/* scrollbar */
.scrollbar {
  flex: none;
  width: 14px;
  display: flex;
  flex-direction: column;
}

.scroll-cap {
  height: 92px;
  background-color: #c8c8c8;
  border-left: 1px solid #000;
}

.scrollbar button {
  display: grid;
  place-items: center;
  height: 16px;
  background-color: #dcdcdc;
}

.track {
  flex: 1;
  display: flex;
  align-items: flex-end;
  padding: 0 2px 1px;
  background-color: #f0f0f0;
  border-left: 1px solid #c4c4c4;
}

.thumb {
  flex: 1;
  height: 24%;
  border-radius: 5px;
  background-color: #6f7676;
}

/* hidden icons flyout */
.tray-popup {
  position: absolute;
  right: 136px;
  bottom: 60px;
  display: grid;
  grid-template-columns: repeat(5, 40px);
  grid-auto-rows: 40px;
  padding: 4px;
  border-radius: 8px;
  background-color: #f9f9f9;
  box-shadow: 0 0 1px #999, 0 4px 10px rgba(0, 0, 0, 0.2);
}

.tray-popup button {
  display: grid;
  place-items: center;
  border-radius: 4px;
}

.tray-popup .hover {
  background-color: #fdfdfd;
  border: 1px solid #eee;
}

/* taskbar */
.taskbar {
  flex: none;
  height: 47px;
  display: grid;
  grid-template-columns: 1fr auto 1fr;
  background: linear-gradient(90deg, #dfe2bd, #d9e2b9 27%, #e5dec0 42%, #eddec5 54%, #e7dfc1 65%, #dee2bb 74%, #eadfc0 80%, #dfe2bd 88%, #e1e1bc);
  border-top: 1px solid #b3b4a0;
  color: #1f1f1f;
  font-family: "Open Sans", sans-serif;
  font-size: 11px;
  line-height: 16px;
}

.weather {
  justify-self: start;
  display: flex;
  align-items: center;
  gap: 8px;
  padding-left: 18px;
  text-align: left;
}

.weather-icon {
  position: relative;
}

.weather-icon b {
  position: absolute;
  top: -6px;
  right: -4px;
  width: 16px;
  border-radius: 50%;
  background-color: #c42b1c;
  color: #fff;
  font-weight: normal;
  text-align: center;
}

.weather-text,
.clock {
  display: flex;
  flex-direction: column;
}

.muted {
  color: #5c5c4c;
}

.apps {
  display: flex;
  align-items: center;
}

.apps button {
  display: grid;
  place-items: center;
  position: relative;
  width: 44px;
  height: 46px;
}

.running::after {
  content: "";
  position: absolute;
  bottom: 4px;
  left: 19px;
  width: 6px;
  height: 3px;
  border-radius: 2px;
  background-color: #85856f;
}

.search {
  display: flex;
  align-items: center;
  gap: 8px;
  width: 218px;
  height: 31px;
  margin: 0 3px 0 4px;
  padding: 0 2px 0 11px;
  border-radius: 16px;
  background-color: #f6f6eb;
  border-bottom: 1px solid #b9b99b;
}

.search input {
  flex: 1;
  min-width: 0;
  border: none;
  background: none;
  font: 13px "Open Sans", sans-serif;
}

.search input::placeholder {
  color: #5f5f5a;
}

.tray {
  justify-self: end;
  display: flex;
  align-items: center;
  padding-right: 18px;
}

.chevron {
  display: grid;
  place-items: center;
  width: 30px;
  height: 38px;
  border-radius: 4px;
  background-color: #f1efdc;
}

.tray-cell {
  display: grid;
  place-items: center;
  width: 32px;
}

.tray-status {
  display: flex;
  align-items: center;
  gap: 8px;
  padding: 0 22px 0 9px;
}

.clock {
  text-align: right;
}
```
